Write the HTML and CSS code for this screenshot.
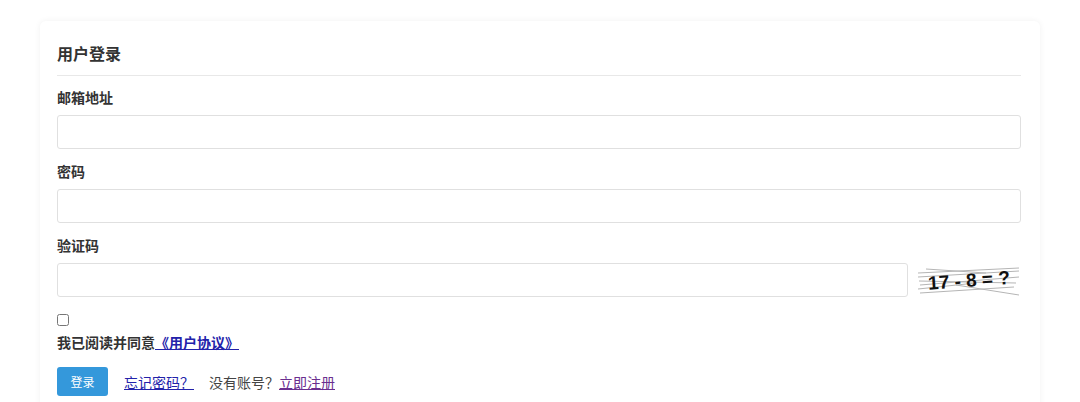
FILE: index.html
```html
<!DOCTYPE html>
<html lang="zh-CN">
<head>
<meta charset="utf-8">
<title>用户登录</title>
<link rel="stylesheet" href="styles.css">
</head>
<body>
<div class="card">
  <h2 class="title">用户登录</h2>
  <div class="rule"></div>
  <label class="label">邮箱地址</label>
  <input class="input" type="text">
  <label class="label">密码</label>
  <input class="input" type="password">
  <label class="label">验证码</label>
  <div class="captcha-row">
    <input class="input grow" type="text">
    <svg class="captcha" width="105" height="34" viewBox="0 0 105 34">
      <g stroke="#b5b5b5" stroke-width="1" fill="none">
        <line x1="2" y1="10" x2="103" y2="5"/>
        <line x1="2" y1="14" x2="103" y2="8"/>
        <line x1="4" y1="22" x2="103" y2="14"/>
        <line x1="3" y1="18" x2="100" y2="20"/>
        <line x1="2" y1="26" x2="60" y2="20"/>
        <line x1="40" y1="22" x2="103" y2="32"/>
        <line x1="4" y1="30" x2="98" y2="24"/>
        <line x1="10" y1="6" x2="70" y2="10"/>
      </g>
      <text x="12" y="24" transform="rotate(-4 52 17)" class="captcha-text">17 - 8 = ?</text>
    </svg>
  </div>
  <input class="check" type="checkbox">
  <div class="agree">我已阅读并同意<a href="#" class="link">《用户协议》</a></div>
  <div class="actions">
    <button class="btn">登录</button>
    <a href="#" class="link forgot">忘记密码？</a>
    <span class="muted">没有账号？</span><a href="#" class="link visited">立即注册</a>
  </div>
</div>
</body>
</html>
```
FILE: styles.css
```css
html, body {
  margin: 0;
  padding: 0;
  background: #ffffff;
}
body {
  font-family: "Noto Sans CJK SC", "Liberation Sans", sans-serif;
  color: #333;
  padding-top: 21px;
}
.card {
  width: 1000px;
  margin: 0 auto;
  box-sizing: border-box;
  padding: 17px 19px 20px 17px;
  background: #fff;
  border-radius: 6px;
  box-shadow: 0 0 6px rgba(0,0,0,0.06);
  display: flex;
  flex-direction: column;
  align-items: flex-start;
}
.title {
  margin: 0;
  font-size: 16px;
  font-weight: 700;
  line-height: 30px;
  color: #333;
}
.rule {
  align-self: stretch;
  height: 1px;
  background: #e8e8e8;
  margin: 7px 0 11px;
}
.label {
  font-size: 14px;
  font-weight: 700;
  line-height: 20px;
  color: #333;
  margin-bottom: 8px;
}
.input {
  align-self: stretch;
  box-sizing: border-box;
  height: 34px;
  border: 1px solid #e0e0e0;
  border-radius: 3px;
  margin: 0 0 12px;
  padding: 0 8px;
  font-size: 14px;
  background: #fff;
}
.captcha-row {
  align-self: stretch;
  display: flex;
  gap: 8px;
  align-items: flex-start;
  margin-bottom: 13px;
}
.captcha-row .input {
  margin: 0;
  flex: 1;
}
.captcha {
  flex: none;
  display: block;
}
.captcha-text {
  font-family: "Liberation Sans", sans-serif;
  font-weight: 700;
  font-size: 19px;
  fill: #111;
}
.check {
  margin: 4px 0 0;
  width: 12px;
  height: 12px;
}
.agree {
  font-size: 14px;
  font-weight: 700;
  line-height: 20px;
  margin-top: 6px;
  color: #333;
}
.agree .link {
  font-weight: 700;
  font-size: 14px;
}
.link {
  color: #2222aa;
  text-decoration: underline;
  font-size: 14px;
}
.link.visited {
  color: #6a2e8f;
}
.actions {
  display: flex;
  align-items: center;
  margin-top: 15px;
  font-size: 14px;
}
.btn {
  width: 51px;
  height: 29px;
  border: none;
  border-radius: 3px;
  background: #3498db;
  color: #fff;
  font-family: "Noto Sans CJK SC", sans-serif;
  font-size: 12px;
  padding: 0;
  margin-right: 16px;
}
.actions .forgot {
  margin-right: 15px;
}
.muted {
  color: #444;
}
```
